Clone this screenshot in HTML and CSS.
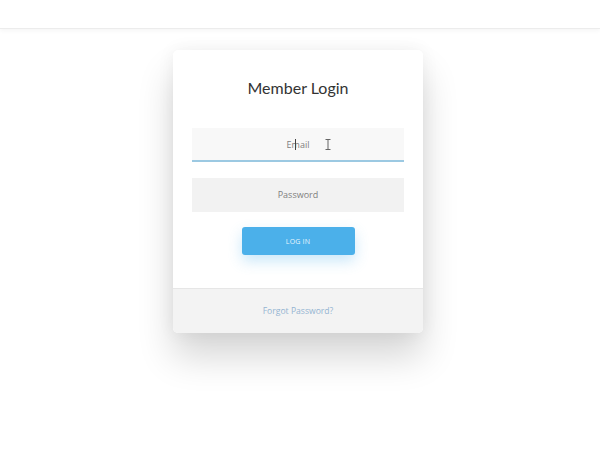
FILE: index.html
```html
<!DOCTYPE html>
<html lang="en">
<head>
    <meta charset="UTF-8">
    <meta name="viewport" content="width=device-width, initial-scale=1.0">
    <title>Member Login</title>
    <link rel="stylesheet" href="styles.css">
</head>
<body>
    <header class="topbar"></header>

    <main class="page">
        <div class="card">
            <div class="card-body">
                <h1>Member Login</h1>
                <div class="field field-active">
                    <input type="text" placeholder="Email">
                    <span class="caret"></span>
                    <svg class="ibeam" width="6" height="11" viewBox="0 0 6 11">
                        <path d="M0.5 0.5h5M0.5 10.5h5M3 0.5v10" stroke="#666" stroke-width="1" fill="none"/>
                    </svg>
                </div>
                <div class="field field-last">
                    <input type="password" placeholder="Password">
                </div>
                <button class="btn-login">LOG IN</button>
            </div>
            <div class="card-footer">
                <a href="#">Forgot Password?</a>
            </div>
        </div>
    </main>
</body>
</html>
```

FILE: styles.css
```css
body {
    font-family: "Open Sans", "Noto Sans", Arial, sans-serif;
    background-color: #fff;
    margin: 0;
    padding: 0;
    min-height: 100vh;
}

.topbar {
    height: 28px;
    background-color: #fff;
    border-bottom: 1px solid #ececec;
    box-shadow: 0 2px 4px rgba(0, 0, 0, 0.04);
}

.page {
    display: flex;
    justify-content: center;
    padding: 21px 4px 100px 0;
}

.card {
    width: 250px;
    background-color: #fff;
    border-radius: 5px;
    overflow: hidden;
    box-shadow: 0 24px 36px rgba(0, 0, 0, 0.16), 0 0 18px rgba(0, 0, 0, 0.06);
}

.card-body {
    padding: 27px 19px 33px;
    display: flex;
    flex-direction: column;
    align-items: center;
}

h1 {
    font-family: Lato, "Open Sans", sans-serif;
    font-size: 16px;
    font-weight: 400;
    color: #333;
    margin: 1px 0 31px;
}

.field {
    position: relative;
    width: 100%;
    margin-bottom: 16px;
}

.field-last {
    margin-bottom: 15px;
}

.field input {
    box-sizing: border-box;
    display: block;
    width: 100%;
    height: 34px;
    border: none;
    border-bottom: 1px solid transparent;
    background-color: #f2f2f2;
    text-align: center;
    font-family: "Open Sans", sans-serif;
    font-size: 9px;
    color: #777;
    outline: none;
}

.field input::placeholder {
    color: #808080;
}

.field-active input {
    background-color: #f8f8f8;
    border-bottom: 2px solid #9cc9e2;
}

.caret {
    position: absolute;
    left: 103px;
    top: 11px;
    width: 1px;
    height: 11px;
    background-color: #444;
}

.ibeam {
    position: absolute;
    left: 133px;
    top: 11px;
}

.btn-login {
    width: 113px;
    height: 28px;
    background-color: #4bb0ea;
    color: #e8f5fd;
    border: none;
    border-radius: 3px;
    font-family: "Open Sans", sans-serif;
    font-size: 7px;
    letter-spacing: 0.2px;
    cursor: pointer;
    box-shadow: 0 6px 14px rgba(75, 176, 234, 0.3);
}

.card-footer {
    height: 44px;
    background-color: #f3f3f3;
    border-top: 1px solid #e6e6e6;
    display: flex;
    align-items: center;
    justify-content: center;
}

.card-footer a {
    font-size: 8.6px;
    color: #93b4d2;
    text-decoration: none;
}
```
